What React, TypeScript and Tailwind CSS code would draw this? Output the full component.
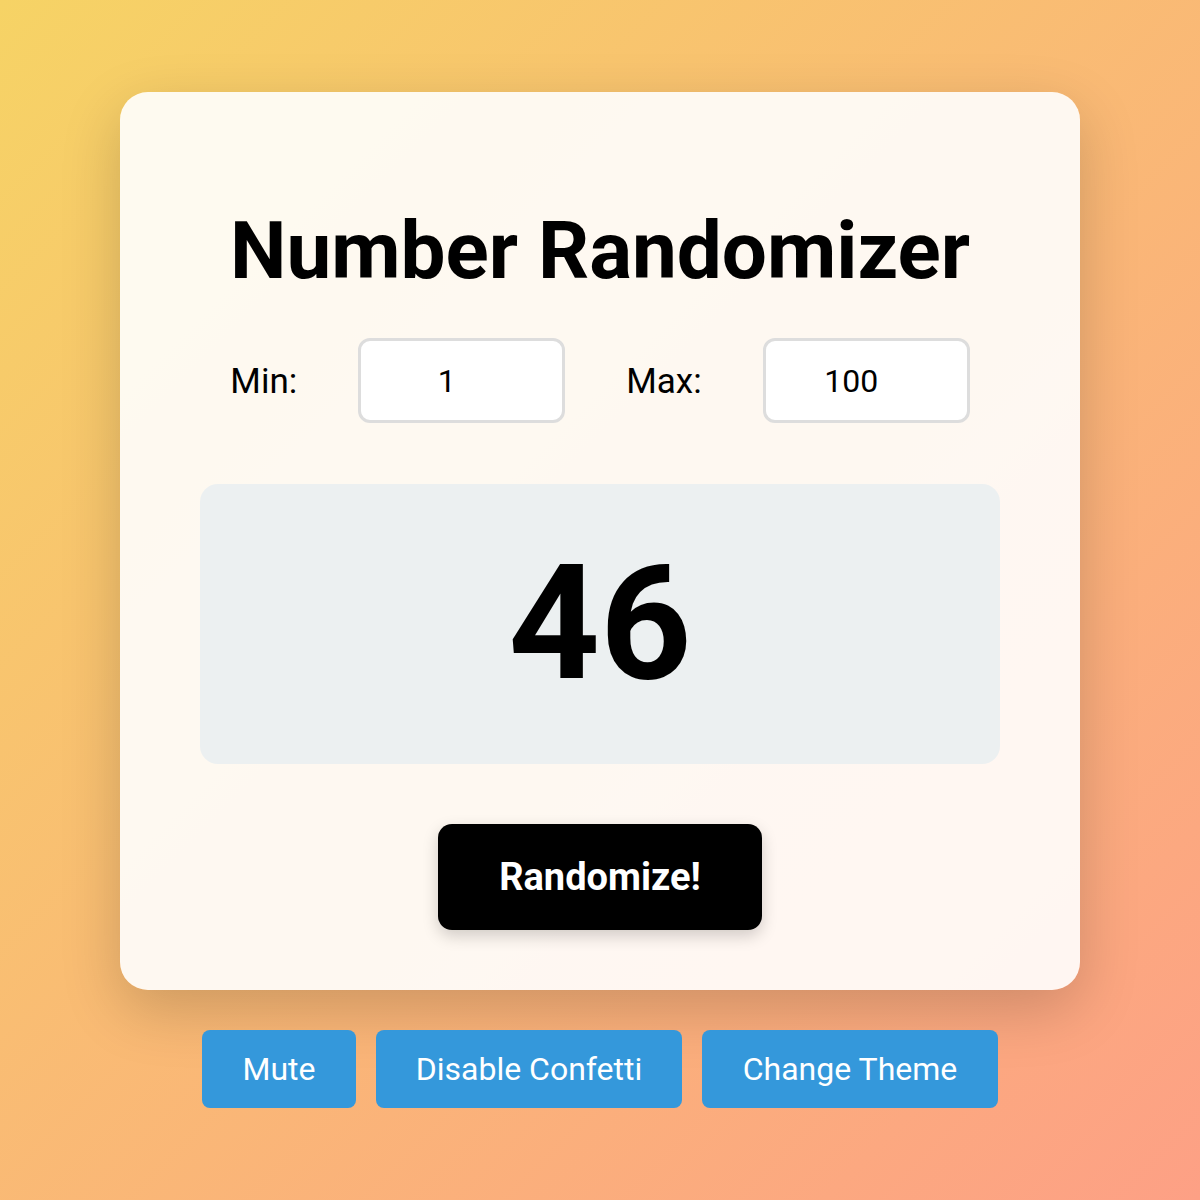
import { useState } from "react";

export default function App() {
  const [min, setMin] = useState("1");
  const [max, setMax] = useState("100");
  const [value, setValue] = useState(46);

  const randomize = () => {
    const lo = parseInt(min, 10) || 0;
    const hi = parseInt(max, 10) || 0;
    setValue(Math.floor(Math.random() * (hi - lo + 1)) + lo);
  };

  return (
    <div
      className="min-h-screen w-full flex flex-col items-center justify-center bg-[linear-gradient(135deg,#f6d365_0%,#fda085_100%)] text-black"
      style={{ fontFamily: "Roboto, 'Noto Sans', sans-serif" }}
    >
      <div className="w-[960px] rounded-[28px] bg-white/90 shadow-[0_20px_60px_rgba(0,0,0,0.18)] pt-[60px] pb-[60px] px-[80px] flex flex-col items-center">
        <h1 className="mt-[39px] text-[80px] font-bold leading-normal">
          Number Randomizer
        </h1>

        <div className="mt-[27px] flex items-center gap-[61px]">
          <label className="text-[35px] mt-[3px]">Min:</label>
          <input
            type="text"
            value={min}
            onChange={(e) => setMin(e.target.value)}
            className="w-[207px] h-[85px] rounded-[12px] border-[3px] border-[#dddddd] bg-white text-center text-[32px] pr-[30px] outline-none"
          />
          <label className="text-[35px] mt-[3px]">Max:</label>
          <input
            type="text"
            value={max}
            onChange={(e) => setMax(e.target.value)}
            className="w-[207px] h-[85px] rounded-[12px] border-[3px] border-[#dddddd] bg-white text-center text-[32px] pr-[30px] outline-none"
          />
        </div>

        <div className="mt-[61px] w-full h-[280px] rounded-[18px] bg-[#ecf0f1] flex items-center justify-center">
          <span className="text-[160px] font-bold leading-normal">{value}</span>
        </div>

        <button
          type="button"
          onClick={randomize}
          className="mt-[60px] w-[324px] h-[106px] rounded-[14px] bg-black text-white text-[38px] font-bold shadow-[0_6px_16px_rgba(0,0,0,0.18)]"
        >
          Randomize!
        </button>
      </div>

      <div className="mt-[40px] flex gap-[20px]">
        <button
          type="button"
          className="w-[154px] h-[78px] rounded-[8px] bg-[#3498db] text-white text-[32px]"
        >
          Mute
        </button>
        <button
          type="button"
          className="w-[306px] h-[78px] rounded-[8px] bg-[#3498db] text-white text-[32px]"
        >
          Disable Confetti
        </button>
        <button
          type="button"
          className="w-[296px] h-[78px] rounded-[8px] bg-[#3498db] text-white text-[32px]"
        >
          Change Theme
        </button>
      </div>
    </div>
  );
}
